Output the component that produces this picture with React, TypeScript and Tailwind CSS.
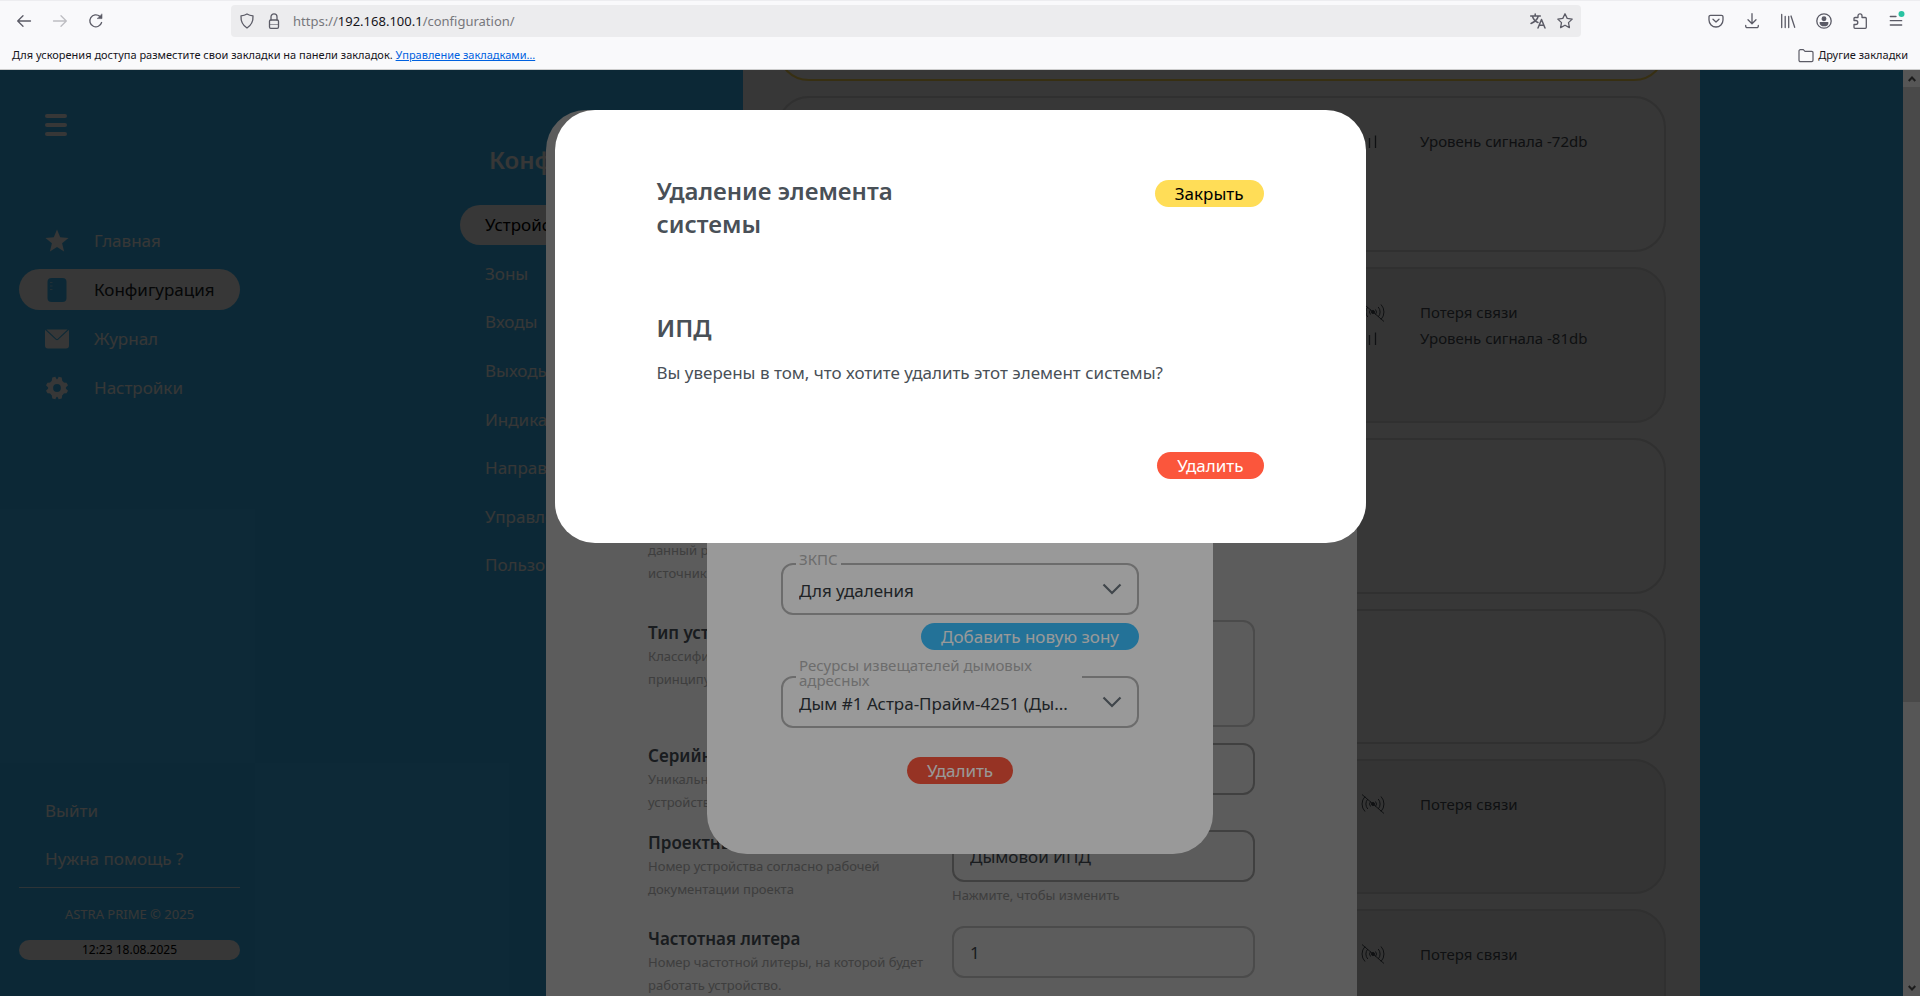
import type { ReactNode } from "react";

const FONT = "font-['Noto_Sans','Open_Sans',sans-serif]";

/* ---------- Browser chrome ---------- */

function ToolIcon({ label, children, dim }: { label: string; children: ReactNode; dim?: boolean }) {
  return (
    <button type="button" aria-label={label} className={dim ? "size-4 shrink-0 text-[#bdbdc2]" : "size-4 shrink-0 text-[#5b5b66]"}>
      <svg viewBox="0 0 16 16" className="size-4 overflow-visible" fill="none" stroke="currentColor" strokeWidth="1.3" strokeLinecap="round" strokeLinejoin="round">
        {children}
      </svg>
    </button>
  );
}

function BrowserBar() {
  return (
    <header className="flex h-[70px] shrink-0 flex-col border-t border-b border-t-[#ededf0] border-b-[#cccccc] bg-[#f9f9fb]">
      <div className="flex h-10 items-center">
        <div className="flex w-[231px] shrink-0 gap-5 pl-4">
          <ToolIcon label="Назад">
            <path d="M14.5 8H2M7 2.7 1.7 8 7 13.3" />
          </ToolIcon>
          <ToolIcon label="Вперёд" dim>
            <path d="M1.5 8H14M9 2.7 14.3 8 9 13.3" />
          </ToolIcon>
          <ToolIcon label="Обновить">
            <path d="M13.6 9.5A6 6 0 1 1 11.8 3.3" />
            <path d="M9.5 5.6H14V1.2z" fill="currentColor" strokeWidth="0.6" />
          </ToolIcon>
        </div>
        <div className="flex h-8 flex-1 items-center gap-[11px] rounded bg-[#ececee] px-2">
          <ToolIcon label="Защита">
            <path d="M8 1c2 1.2 4 1.7 6 1.9.3 5-1.6 9.3-6 12.1C3.6 12.2 1.7 7.9 2 2.9 4 2.7 6 2.2 8 1z" />
          </ToolIcon>
          <ToolIcon label="Соединение">
            <rect x="3.500" y="7" width="9" height="8.300" rx="1.300" />
            <path d="M5 7V3.800a3 3 0 0 1 6 0V7" />
            <path d="M4 11.500h8" strokeWidth="0.6" />
          </ToolIcon>
          <span className="flex-1 text-[13px] leading-8 text-[#77777c]">
            https://<span className="text-[#15141a]">192.168.100.1</span>/configuration/
          </span>
          <ToolIcon label="Перевести">
            <path d="M.7 3h9.600M5.200 1v2M8.300 3C7.500 6.300 4.500 9 1 10.500M2.500 3.500C3.500 6.500 5.500 8.500 8 9.500M8 15l3.500-8.500L15 15M9.200 12.300h4.600" strokeWidth="1.500" />
          </ToolIcon>
          <ToolIcon label="Добавить в закладки">
            <path d="m8 .8 2.200 4.600 5 .7-3.700 3.500.9 5L8 12.200l-4.400 2.400.9-5L.8 6.100l5-.7z" />
          </ToolIcon>
        </div>
        <div className="flex w-[339px] shrink-0 justify-end gap-5 pr-4">
          <ToolIcon label="Pocket">
            <path d="M2.500 2.300h11a1.500 1.500 0 0 1 1.500 1.500V7A7 7 0 0 1 1 7V3.800a1.500 1.500 0 0 1 1.500-1.500z" />
            <path d="M5 6.300 8 9l3-2.700" />
          </ToolIcon>
          <ToolIcon label="Загрузки">
            <path d="M8 .7v9.800M4 6.700l4 4 4-4M1.700 12.500v.7a1.500 1.500 0 0 0 1.500 1.500h9.600a1.500 1.500 0 0 0 1.500-1.500v-.7" />
          </ToolIcon>
          <ToolIcon label="Библиотека">
            <path d="M1.700 1.500v13M5.200 3.500v11M8.700 3.500v11M11 3l3.700 11.300" />
          </ToolIcon>
          <ToolIcon label="Аккаунт">
            <circle cx="8" cy="8" r="7.200" />
            <circle cx="8" cy="5.800" r="1.800" fill="currentColor" />
            <path d="M4.200 9.700h7.600c0 2-1.800 3-3.800 3s-3.800-1-3.800-3z" fill="currentColor" />
          </ToolIcon>
          <ToolIcon label="Расширения">
            <path d="M6 4.500V2.800a2 2 0 0 1 4 0v1.700h3.300a1 1 0 0 1 1 1v8.800a1 1 0 0 1-1 1H3a1 1 0 0 1-1-1v-2.800h1.800a2 2 0 0 0 0-4H2V5.500a1 1 0 0 1 1-1z" />
          </ToolIcon>
          <ToolIcon label="Меню">
            <path d="M2.300 3.500H8M2.300 7.700h11.400M2.300 12h11.400" />
            <circle cx="13.500" cy="1" r="3" fill="#2ac3a2" stroke="none" />
          </ToolIcon>
        </div>
      </div>
      <div className="flex flex-1 items-center justify-between pt-px pr-3 pl-3 text-[11px] text-[#15141a]">
        <p>
          Для ускорения доступа разместите свои закладки на панели закладок.{" "}
          <a href="#bookmarks" className="text-[#0061e0] underline">Управление закладками…</a>
        </p>
        <button type="button" className="flex items-center gap-1">
          <svg viewBox="0 0 16 16" className="size-4" fill="none" stroke="#5b5b66" strokeWidth="1.2" strokeLinejoin="round">
            <path d="M1 3a1.300 1.300 0 0 1 1.300-1.300h3L7 3.400h6.700A1.300 1.300 0 0 1 15 4.700v7.600a1.300 1.300 0 0 1-1.300 1.300H2.300A1.300 1.300 0 0 1 1 12.300z" />
          </svg>
          Другие закладки
        </button>
      </div>
    </header>
  );
}

/* ---------- Page navigation ---------- */

const StarIcon = (
  <svg viewBox="0 0 24 24" className="size-6" fill="currentColor">
    <path d="m12 .5 3.200 7.800 8.300.6-6.400 5.400 2 8.200L12 18l-7.100 4.500 2-8.200L.5 8.900l8.300-.6z" />
  </svg>
);
const BookIcon = (
  <svg viewBox="0 0 24 24" className="size-6" fill="#3bbffd">
    <rect x="2.500" y="0" width="19" height="24" rx="4" />
    <path d="M5 4.500h2.500M5 8h2.500M5 11.500h2.500" stroke="#ffffff" strokeWidth="0.5" />
  </svg>
);
const MailIcon = (
  <svg viewBox="0 0 24 24" className="size-6" fill="currentColor">
    <path d="M1.500 2.500h21L12.500 12a.8.8 0 0 1-1 0z" />
    <path d="M.3 3 10.900 12.700a1.700 1.700 0 0 0 2.200 0L23.700 3q.3.500.3 1.300V18.500a3 3 0 0 1-3 3H3a3 3 0 0 1-3-3V4.300Q0 3.500.3 3z" />
  </svg>
);
const GearIcon = (
  <svg viewBox="0 0 24 24" className="size-6">
    <g fill="currentColor">
      <circle cx="12" cy="12" r="8.800" />
      <path d="M6.500 6 7.300 1.500 10.300.8 12 4l1.700-3.200 3 .7.8 4.500zM6.500 18l.8 4.500 3 .7L12 20l1.700 3.200 3-.7.8-4.500zM6 6.500l-3.500.2L1 9.300 3.800 12 1 14.700l1.500 2.600 3.500.2zM18 6.500l3.500.2L23 9.300 20.200 12l2.800 2.700-1.500 2.600-3.500.2z" />
    </g>
    <circle cx="12" cy="12" r="3.900" fill="#3bbffd" />
  </svg>
);

const mainNav = [
  { label: "Главная", icon: StarIcon, active: false },
  { label: "Конфигурация", icon: BookIcon, active: true },
  { label: "Журнал", icon: MailIcon, active: false },
  { label: "Настройки", icon: GearIcon, active: false },
];

function Sidebar() {
  return (
    <aside className="flex w-[240px] shrink-0 flex-col pb-9 pl-[19px] text-white">
      <button type="button" aria-label="Меню" className="mt-11 ml-[26px] flex w-[22px] flex-col gap-[5px]">
        <span className="h-1 w-full rounded-full bg-white" />
        <span className="h-1 w-full rounded-full bg-white" />
        <span className="h-1 w-full rounded-full bg-white" />
      </button>
      <nav className="mt-[84px] flex flex-col gap-2">
        {mainNav.map((item) => (
          <a
            key={item.label}
            href="#nav"
            className={
              item.active
                ? "flex h-[41px] items-center gap-[25px] rounded-full bg-white pl-[26px] text-[17px] text-[#212529]"
                : "flex h-[41px] items-center gap-[25px] pl-[26px] text-[17px]"
            }
          >
            {item.icon}
            {item.label}
          </a>
        ))}
      </nav>
      <div className="mt-auto flex flex-col">
        <div className="flex flex-col gap-6 pl-[26px] text-[17px] leading-6">
          <a href="#logout">Выйти</a>
          <a href="#help">Нужна помощь ?</a>
        </div>
        <div className="mt-4 border-t border-white/80" />
        <p className="mt-4 text-center text-[13px] leading-5 text-white">ASTRA PRIME © 2025</p>
        <p className="mt-4 h-5 rounded-full bg-white text-center text-xs leading-5 text-black">12:23 18.08.2025</p>
      </div>
    </aside>
  );
}

const sections = ["Устройства", "Зоны", "Входы", "Выходы", "Индикация", "Направления", "Управление", "Пользователи"];

function SectionNav() {
  return (
    <div className="w-[283px] shrink-0 pt-[73px] text-white">
      <h1 className="pl-[29px] text-2xl leading-[33px] font-semibold">Конфигурация</h1>
      <nav className="mt-[29px] flex h-[380px] flex-col justify-between">
        {sections.map((name, i) => (
          <a
            key={name}
            href="#section"
            className={
              i === 0
                ? "flex h-10 w-[200px] items-center rounded-full bg-white pl-[25px] text-[17px] text-black"
                : "flex h-10 items-center pl-[25px] text-[17px]"
            }
          >
            {name}
          </a>
        ))}
      </nav>
    </div>
  );
}

/* ---------- Device cards ---------- */

function LostIcon() {
  return (
    <svg viewBox="0 0 24 20" className="h-5 w-6" fill="none" stroke="currentColor" strokeWidth="1">
      <path d="M1 .5 23 19.500M4 2.500a11 11 0 0 0 0 15M6.800 5a7.500 7.500 0 0 0 0 10M9.500 7.500a4 4 0 0 0 0 5M20 2.500a11 11 0 0 1 0 15M17.200 5a7.500 7.500 0 0 1 0 10M14.500 7.500a4 4 0 0 1 0 5" />
      <circle cx="12" cy="10" r="1.500" fill="currentColor" />
    </svg>
  );
}

function SignalIcon() {
  return (
    <svg viewBox="0 0 24 20" className="h-5 w-6" fill="none" stroke="currentColor" strokeWidth="1.300">
      <path d="M2.500 17v-5M8.500 17V7M14.500 17V4.500" />
    </svg>
  );
}

type Status = { kind: "lost" | "signal"; text: string };
const cards: { tall: boolean; statuses: Status[] }[] = [
  { tall: true, statuses: [{ kind: "signal", text: "Уровень сигнала -72db" }] },
  { tall: true, statuses: [{ kind: "lost", text: "Потеря связи" }, { kind: "signal", text: "Уровень сигнала -81db" }] },
  { tall: true, statuses: [] },
  { tall: false, statuses: [] },
  { tall: false, statuses: [{ kind: "lost", text: "Потеря связи" }] },
  { tall: false, statuses: [{ kind: "lost", text: "Потеря связи" }] },
];

function DeviceList() {
  return (
    <section className="flex min-w-0 flex-1 flex-col gap-[15px] overflow-hidden bg-white px-[34px]">
      <div className="h-[11px] shrink-0">
        <div className="-mt-[81px] h-[92px] rounded-[32px] border-2 border-[#ffdd57]" />
      </div>
      {cards.map((card, i) => (
        <article
          key={i}
          className={
            (card.tall ? "h-[156px] " : "h-[135px] ") +
            (card.statuses.some((s) => s.kind === "lost") ? "bg-[#f6f6f6] " : "bg-white ") +
            "flex shrink-0 justify-end rounded-[32px] border-2 border-[#dedede] pt-[30px]"
          }
        >
          <ul className="w-[303px]">
            {card.statuses.map((s) => (
              <li key={s.text} className="flex h-[26px] items-center gap-[35px] text-[15px] text-[#495057]">
                {s.kind === "lost" ? <LostIcon /> : <SignalIcon />}
                {s.text}
              </li>
            ))}
          </ul>
        </article>
      ))}
    </section>
  );
}

/* ---------- Device settings sheet ---------- */

function Row({ title, lines, children }: { title: string; lines: string[]; children: ReactNode }) {
  return (
    <label className="flex gap-4">
      <span className="w-[288px] shrink-0">
        <span className="block text-[17px] leading-[25px] font-semibold text-[#495057]">{title}</span>
        {lines.map((l) => (
          <span key={l} className="block text-[13px] leading-[23px] whitespace-nowrap text-[#adadad]">{l}</span>
        ))}
      </span>
      <span className="w-[303px] shrink-0">{children}</span>
    </label>
  );
}

function SettingsSheet() {
  return (
    <div className="absolute inset-0 flex justify-center overflow-hidden bg-black/40 pt-10">
      <section className="flex h-[960px] w-[811px] shrink-0 flex-col gap-4 rounded-t-[40px] bg-white px-[102px] pt-[429px]">
        <p className="h-[65px] text-[13px] leading-[23px] text-[#adadad]">
          данный раздел
          <br />
          источник
        </p>
        <Row title="Тип устройства" lines={["Классификация по", "принципу действия"]}>
          <textarea readOnly className="block h-[107px] w-full resize-none rounded-xl border-2 border-[#d0d0d0]" />
        </Row>
        <Row title="Серийный номер" lines={["Уникальный номер", "устройства"]}>
          <input readOnly className="block h-[52px] w-full rounded-xl border-2 border-[#b3b3b3]" />
        </Row>
        <Row title="Проектный номер" lines={["Номер устройства согласно рабочей", "документации проекта"]}>
          <input defaultValue="Дымовой ИПД" className="block h-[52px] w-full rounded-xl border-2 border-[#b3b3b3] px-4 text-[17px] text-[#495057]" />
          <span className="block pb-[2px] text-[13px] leading-[26px] text-[#adadad]">Нажмите, чтобы изменить</span>
        </Row>
        <Row title="Частотная литера" lines={["Номер частотной литеры, на которой будет", "работать устройство."]}>
          <input readOnly defaultValue="1" className="block h-[52px] w-full rounded-xl border-2 border-[#d0d0d0] px-4 text-[17px] text-[#495057]" />
        </Row>
      </section>
    </div>
  );
}

/* ---------- Zone dialog ---------- */

function SelectField({ id, label, value, wide }: { id: string; label: string; value: string; wide?: boolean }) {
  return (
    <div className="relative">
      <select id={id} className="block h-[52px] w-full appearance-none truncate rounded-xl border-2 border-[#b5b5b5] bg-white pt-1 pr-14 pl-4 text-[17px] text-[#343a40]">
        <option>{value}</option>
      </select>
      <label
        htmlFor={id}
        className={
          wide
            ? "absolute -top-[18px] left-[15px] w-[286px] bg-white px-[3px] pr-10 text-[15px] leading-[15px] text-[#b5b5b5]"
            : "absolute -top-[11px] left-[15px] bg-white px-[3px] text-[15px] leading-[15px] text-[#b5b5b5]"
        }
      >
        {label}
      </label>
      <svg viewBox="0 0 18 10" className="pointer-events-none absolute top-[21px] right-[18px] h-[10px] w-[18px] overflow-visible" fill="none" stroke="#6c757d" strokeWidth="2.200">
        <path d="m.5.5 8.500 8.500 8.500-8.500" />
      </svg>
    </div>
  );
}

function Pill({ children, tone }: { children: ReactNode; tone: "yellow" | "red" | "blue" }) {
  const tones = {
    yellow: "bg-[#ffdd57] text-black",
    red: "bg-[#fb563c] text-white",
    blue: "bg-[#3bbffd] text-white",
  };
  return (
    <button type="button" className={"h-[27px] shrink-0 rounded-full px-5 text-[17px] leading-[27px] " + tones[tone]}>
      {children}
    </button>
  );
}

function ZoneDialog() {
  return (
    <div className="absolute inset-0 flex items-center justify-center bg-black/40">
      <section className="flex h-[642px] w-[506px] flex-col justify-end rounded-[40px] bg-white px-[74px] pb-[70px]">
        <SelectField id="zone" label="ЗКПС" value="Для удаления" />
        <div className="mt-2 flex justify-end">
          <Pill tone="blue">Добавить новую зону</Pill>
        </div>
        <div className="mt-[26px]">
          <SelectField id="resource" label="Ресурсы извещателей дымовых адресных" value="Дым #1 Астра-Прайм-4251 (Ды..." wide />
        </div>
        <div className="mt-[29px] flex justify-center">
          <Pill tone="red">Удалить</Pill>
        </div>
      </section>
    </div>
  );
}

/* ---------- Confirmation dialog ---------- */

function ConfirmDialog() {
  return (
    <div className="absolute inset-0 flex items-start justify-center bg-black/40 pt-10">
      <section role="dialog" aria-labelledby="confirm-title" className="w-[811px] rounded-[40px] bg-white px-[102px] pt-16 pb-16 text-[#495057]">
        <div className="flex items-start justify-between">
          <h2 id="confirm-title" className="w-[300px] text-2xl leading-[33px] font-semibold">Удаление элемента системы</h2>
          <div className="flex pt-[6px]">
            <Pill tone="yellow">Закрыть</Pill>
          </div>
        </div>
        <h3 className="mt-[71px] text-2xl leading-[33px] font-semibold">ИПД</h3>
        <p className="mt-4 text-[17px] leading-[26px]">Вы уверены в том, что хотите удалить этот элемент системы?</p>
        <div className="mt-[66px] flex justify-end">
          <Pill tone="red">Удалить</Pill>
        </div>
      </section>
    </div>
  );
}

/* ---------- Scroll bar ---------- */

function ScrollBar() {
  return (
    <div aria-hidden="true" className="flex w-[17px] shrink-0 flex-col bg-[#f0f0f0]">
      <span className="flex h-[17px] items-center justify-center">
        <svg viewBox="0 0 8 6" className="h-[6px] w-2" fill="none" stroke="#505050" strokeWidth="2">
          <path d="m.7 5 3.300-3.500L7.300 5" />
        </svg>
      </span>
      <span className="grow-[615] bg-[#cdcdcd]" />
      <span className="grow-[277]" />
      <span className="flex h-[17px] items-center justify-center">
        <svg viewBox="0 0 8 6" className="h-[6px] w-2" fill="none" stroke="#505050" strokeWidth="2">
          <path d="m.7 1 3.300 3.500L7.300 1" />
        </svg>
      </span>
    </div>
  );
}

export default function App() {
  return (
    <div className={"flex h-screen flex-col overflow-hidden " + FONT}>
      <BrowserBar />
      <main className="relative flex min-h-0 flex-1">
        <div className="relative flex min-w-0 flex-1 overflow-hidden bg-[#3bbffd]">
          <Sidebar />
          <div className="flex min-w-0 flex-1 pr-[203px] pl-[220px]">
            <SectionNav />
            <DeviceList />
          </div>
          <SettingsSheet />
        </div>
        <ScrollBar />
        <ZoneDialog />
        <ConfirmDialog />
      </main>
    </div>
  );
}
